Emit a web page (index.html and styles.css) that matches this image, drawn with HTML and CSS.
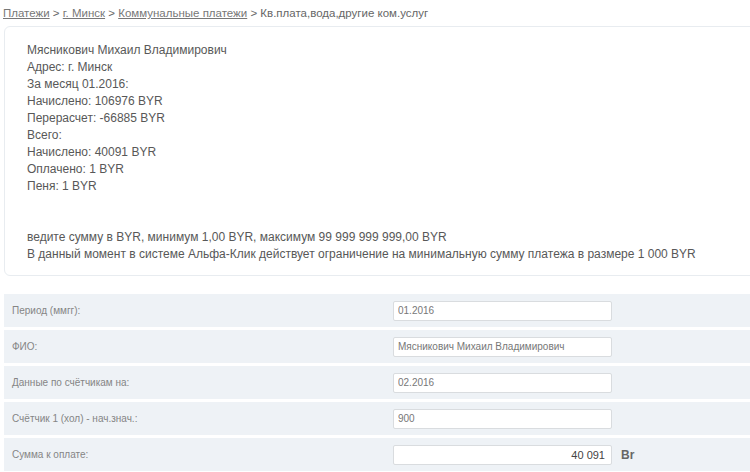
FILE: index.html
```html
<!DOCTYPE html>
<html lang="ru">
<head>
  <meta charset="UTF-8" />
  <title>Кв.плата,вода,другие ком.услуг</title>
  <link rel="stylesheet" href="styles.css">
</head>
<body>

  <div class="crumbs">
    <a href="#">Платежи</a> &gt; <a href="#">г. Минск</a> &gt; <a href="#">Коммунальные платежи</a> &gt; Кв.плата,вода,другие ком.услуг
  </div>

  <div class="card">
    Мясникович Михаил Владимирович<br>
    Адрес: г. Минск<br>
    За месяц 01.2016:<br>
    Начислено: 106976 BYR<br>
    Перерасчет: -66885 BYR<br>
    Всего:<br>
    Начислено: 40091 BYR<br>
    Оплачено: 1 BYR<br>
    Пеня: 1 BYR<br>
    <br>
    <br>
    ведите сумму в BYR, минимум 1,00 BYR, максимум 99 999 999 999,00 BYR<br>
    В данный момент в системе Альфа-Клик действует ограничение на минимальную сумму платежа в размере 1 000 BYR
  </div>

  <div class="form">
    <div class="row">
      <label>Период (ммгг):</label>
      <input class="field" type="text" value="01.2016">
    </div>
    <div class="row">
      <label>ФИО:</label>
      <input class="field" type="text" value="Мясникович Михаил Владимирович">
    </div>
    <div class="row">
      <label>Данные по счётчикам на:</label>
      <input class="field" type="text" value="02.2016">
    </div>
    <div class="row">
      <label>Счётчик 1 (хол) - нач.знач.:</label>
      <input class="field" type="text" value="900">
    </div>
    <div class="row">
      <label>Сумма к оплате:</label>
      <input class="field field-sum" type="text" value="40 091">
      <span class="cur">Br</span>
    </div>
  </div>

</body>
</html>
```

FILE: styles.css
```css
body {
  margin: 0;
  font-family: "Liberation Sans", Arial, sans-serif;
  color: #555;
  background: #fff;
  overflow: hidden;
}

.crumbs {
  padding: 6px 0 0 3px;
  font-size: 11.5px;
  line-height: 14px;
  color: #666;
}

.crumbs a {
  color: #777;
  text-decoration: underline;
}

.card {
  margin: 6px -20px 0 4px;
  padding: 15px 22px 12px;
  border: 1px solid #e8ecf0;
  border-radius: 6px;
  font-size: 12px;
  line-height: 17px;
  color: #585858;
}

.form {
  margin: 18px 0 0 4px;
  display: flex;
  flex-direction: column;
  gap: 3px;
}

.row {
  height: 33px;
  background: #eef2f6;
  display: grid;
  grid-template-columns: 389px 219px auto;
  align-items: center;
}

.row label {
  padding-left: 8px;
  font-size: 10px;
  color: #858585;
}

.field {
  box-sizing: border-box;
  width: 219px;
  height: 20px;
  margin: 0;
  padding: 0 4px;
  border: 1px solid #d9dcdf;
  border-radius: 2px;
  background: #fff;
  font-family: "Liberation Sans", Arial, sans-serif;
  font-size: 10px;
  color: #777;
}

.field-sum {
  padding-right: 6px;
  text-align: right;
  color: #444;
  font-size: 11px;
}

.cur {
  padding-left: 9px;
  font-size: 12px;
  font-weight: bold;
  color: #666;
}
```
